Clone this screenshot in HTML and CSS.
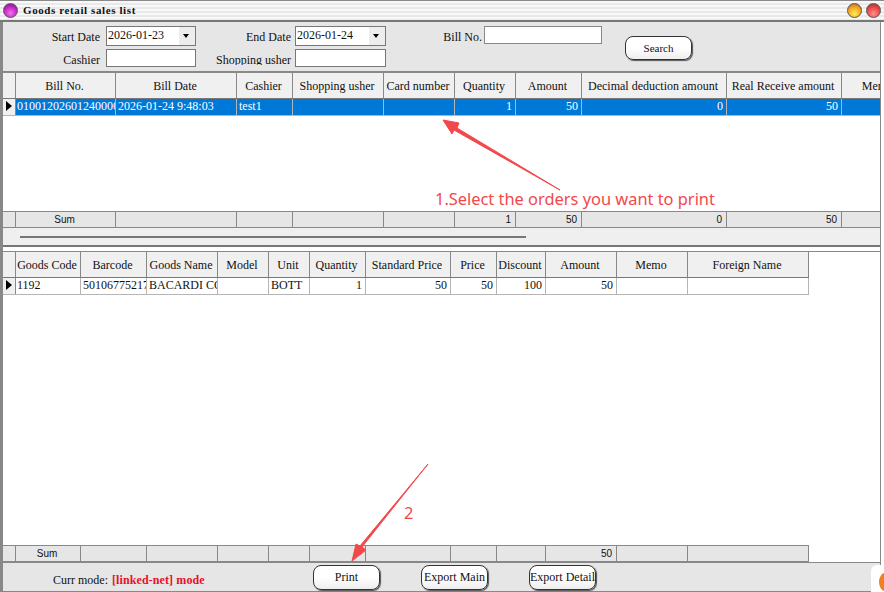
FILE: index.html
```html
<!DOCTYPE html>
<html lang="en">
<head>
    <meta charset="UTF-8">
    <title>Goods retail sales list</title>
    <link rel="stylesheet" href="styles.css">
</head>
<body>
    <div class="window">
        <div class="titlebar">
            <span class="orb orb-purple"></span>
            <span class="title-text">Goods retail sales list</span>
            <span class="orb orb-yellow"></span>
            <span class="orb orb-red"></span>
        </div>

        <div class="filters">
            <label class="f-label f-label-1">Start Date</label>
            <div class="date-box"><span>2026-01-23</span><i class="drop"></i></div>
            <label class="f-label f-label-2">End Date</label>
            <div class="date-box"><span>2026-01-24</span><i class="drop"></i></div>
            <label class="f-label f-label-3">Bill No.</label>
            <div class="text-box bill-box"></div>
            <button class="btn search-btn">Search</button>
            <label class="f-label f-label-1">Cashier</label>
            <div class="text-box"></div>
            <label class="f-label f-label-2 clipped"><span>Shopping usher</span></label>
            <div class="text-box"></div>
        </div>

        <!-- main grid -->
        <div class="grid main-grid">
            <div class="row head">
                <div></div><div>Bill No.</div><div>Bill Date</div><div>Cashier</div><div>Shopping usher</div><div>Card number</div><div>Quantity</div><div>Amount</div><div>Decimal deduction amount</div><div>Real Receive amount</div><div>Memo</div>
            </div>
            <div class="row data selected">
                <div class="marker"></div><div>01001202601240000</div><div>2026-01-24 9:48:03</div><div>test1</div><div></div><div></div><div class="num">1</div><div class="num">50</div><div class="num">0</div><div class="num">50</div><div></div>
            </div>
            <div class="blank"></div>
            <div class="row sum">
                <div></div><div class="center">Sum</div><div></div><div></div><div></div><div></div><div class="num">1</div><div class="num">50</div><div class="num">0</div><div class="num">50</div><div></div>
            </div>
            <div class="scrollbar"><div class="thumb"></div></div>
        </div>

        <div class="splitter"></div>

        <!-- detail grid -->
        <div class="grid detail-grid">
            <div class="row head">
                <div></div><div>Goods Code</div><div>Barcode</div><div>Goods Name</div><div>Model</div><div>Unit</div><div>Quantity</div><div>Standard Price</div><div>Price</div><div>Discount</div><div>Amount</div><div>Memo</div><div>Foreign Name</div>
            </div>
            <div class="row data">
                <div class="marker"></div><div>1192</div><div>5010677521700</div><div>BACARDI COCKTAIL</div><div></div><div>BOTT</div><div class="num">1</div><div class="num">50</div><div class="num">50</div><div class="num">100</div><div class="num">50</div><div></div><div></div>
            </div>
            <div class="blank"></div>
            <div class="row sum">
                <div></div><div class="center">Sum</div><div></div><div></div><div></div><div></div><div></div><div></div><div></div><div></div><div class="num">50</div><div></div><div></div>
            </div>
        </div>

        <div class="statusbar">
            <span class="mode-label">Curr mode:</span>
            <span class="mode-value">[linked-net] mode</span>
            <button class="btn print-btn">Print</button>
            <button class="btn export-main">Export Main</button>
            <button class="btn export-detail">Export Detail</button>
        </div>
    </div>

    <!-- annotations drawn on top of the screenshot -->
    <svg class="arrows" viewBox="0 0 884 592" width="884" height="592">
        <path d="M560 190 L457 128 L459 123 L443 120 L452 134 L454 130 Z" fill="#f2484b" stroke="#f2484b" stroke-width="1"/>
        <path d="M428 464 L362 547 L366 550 L352 561 L356 544 L360 546 Z" fill="#f2484b" stroke="#f2484b" stroke-width="1"/>
    </svg>
    <div class="note note-1">1.Select the orders you want to print</div>
    <div class="note note-2">2</div>
    <div class="corner-badge"><i></i></div>
</body>
</html>
```

FILE: styles.css
```css
body {
    margin: 0;
    background: #fff;
    font-family: "Liberation Serif", serif;
    font-size: 12px;
    color: #111;
    overflow: hidden;
}

.window {
    width: 881px;
    height: 592px;
    box-sizing: border-box;
    border-left: 3px solid #888;
    border-right: 1px solid #888;
    border-bottom: 1px solid #888;
    display: flex;
    flex-direction: column;
    background: #e6e6e6;
}

/* title bar */
.titlebar {
    width: 884px;
    margin-left: -3px;
    height: 22px;
    box-sizing: border-box;
    flex: none;
    display: flex;
    align-items: center;
    padding: 0 3px 1px 3px;
    border-top: 1px solid #8a8a8a;
    border-bottom: 2px solid #777;
    background: repeating-linear-gradient(#f8f8f8 0, #f8f8f8 2px, #e9e9e9 2px, #e9e9e9 4px);
}

.title-text {
    margin-left: 5px;
    margin-right: auto;
    font-weight: bold;
    font-size: 11px;
    letter-spacing: 0.6px;
}

.orb {
    width: 13px;
    height: 13px;
    border-radius: 50%;
    border: 1px solid #555;
    box-sizing: content-box;
}

.orb-purple { background: radial-gradient(circle at 50% 70%, #f070f0, #c020c0 60%, #702070); }
.orb-yellow { background: radial-gradient(circle at 50% 75%, #ffee50, #f0a020 60%, #a06020); margin-right: 4px; }
.orb-red { background: radial-gradient(circle at 50% 75%, #ff9090, #e84040 60%, #903030); }

/* filter form */
.filters {
    flex: none;
    height: 49px;
    display: grid;
    grid-template-columns: 103px 90px 99px 91px 98px 118px 90px;
    grid-template-rows: 23px 18px;
    padding-top: 4px;
    box-sizing: border-box;
    align-items: start;
}

.f-label {
    text-align: right;
    line-height: 20px;
    margin-top: 1px;
    white-space: nowrap;
}

.f-label-1 { padding-right: 6px; }
.f-label-2 { padding-right: 4px; }
.f-label-3 { padding-right: 2px; }

.clipped {
    height: 15px;
    overflow: hidden;
}

.date-box, .text-box {
    height: 18px;
    box-sizing: border-box;
    border: 1px solid #777;
    background: #fff;
}

.date-box {
    display: flex;
    justify-content: space-between;
    line-height: 16px;
    padding-left: 1px;
    height: 20px;
}

.bill-box {
    height: 18px;
    border-color: #888;
}

.drop {
    width: 16px;
    background: #ededed;
    border-left: 1px solid #fff;
    position: relative;
}

.drop:after {
    content: '';
    position: absolute;
    left: 4px;
    top: 7px;
    border-left: 3.5px solid transparent;
    border-right: 3.5px solid transparent;
    border-top: 4px solid #000;
}

.btn {
    width: 67px;
    height: 25px;
    box-sizing: border-box;
    padding: 0;
    border: 1px solid #333;
    border-radius: 8px;
    background: linear-gradient(#fff 50%, #eee);
    box-shadow: 1px 1px 1px #555;
    font-family: "Liberation Serif", serif;
    font-size: 12px;
    color: #111;
    white-space: nowrap;
}

.search-btn {
    grid-column: 7;
    grid-row: 1 / 3;
    justify-self: end;
    margin-top: 10px;
    height: 24px;
    font-size: 11px;
}

/* grids */
.grid {
    display: flex;
    flex-direction: column;
    box-sizing: border-box;
    background: #fff;
    overflow: hidden;
    flex: none;
}

.main-grid {
    height: 174px;
    border-top: 2px solid #888;
}

.detail-grid {
    flex: 1;
    border-top: 1px solid #888;
}

.row {
    display: grid;
    flex: none;
}

.main-grid .row {
    grid-template-columns: 13px 100px 121px 56px 91px 71px 61px 66px 145px 115px 74px;
    width: 922px;
}

.detail-grid .row {
    grid-template-columns: 13px 65px 66px 71px 51px 41px 56px 85px 46px 49px 71px 71px 121px;
    width: 806px;
}

.row > div {
    box-sizing: border-box;
    overflow: hidden;
    white-space: nowrap;
    border-right: 1px solid #999;
}

.head {
    height: 25px;
    background: #f0f0f0;
    border-bottom: 1px solid #777;
}

.head > div {
    text-align: center;
    line-height: 26px;
    padding-right: 2px;
    border-right-color: #888;
}

.data {
    height: 16px;
    line-height: 15px;
    background: #fff;
    border-bottom: 1px solid #b5b5b5;
}

.data > div {
    padding: 0 0 0 2px;
    border-right-color: #b5b5b5;
}

.data > .marker + div {
    padding-left: 1px;
}

.data .num {
    text-align: right;
    padding-right: 3px;
}

.sum .num {
    text-align: right;
    padding-right: 4px;
}

.selected {
    background: #0078d7;
    color: #fff;
}

.marker {
    background: #f0f0f0;
    border-right-color: #888 !important;
    position: relative;
}

.marker:after {
    content: '';
    position: absolute;
    left: 3px;
    top: 2px;
    border-top: 5.5px solid transparent;
    border-bottom: 5.5px solid transparent;
    border-left: 6px solid #000;
}

.blank {
    flex: 1;
    background: #fff;
}

.sum {
    height: 17px;
    box-sizing: border-box;
    background: #e6e6e6;
    border-top: 1px solid #888;
    border-bottom: 1px solid #888;
    font-family: "Liberation Sans", sans-serif;
    font-size: 10px;
    line-height: 15px;
}

.sum > div {
    border-right-color: #888;
}

.sum .center {
    text-align: center;
    padding-right: 2px;
}

.scrollbar {
    flex: none;
    height: 17px;
    background: #efefef;
    padding: 8px 0 0 17px;
    box-sizing: border-box;
}

.thumb {
    width: 506px;
    height: 2px;
    background: #777;
}

.splitter {
    flex: none;
    height: 6px;
    box-sizing: border-box;
    border-top: 2px solid #777;
    background: #fff;
}

/* bottom bar */
.statusbar {
    flex: none;
    height: 29px;
    box-sizing: border-box;
    border-top: 1px solid #888;
    display: flex;
    align-items: flex-start;
    padding-left: 50px;
}

.mode-label {
    margin-top: 10px;
    line-height: 14px;
}

.mode-value {
    margin-top: 10px;
    margin-left: 4px;
    width: 201px;
    line-height: 14px;
    font-weight: bold;
    letter-spacing: 0.1px;
    color: #e8102a;
}

.statusbar .btn {
    margin-top: 2px;
}

.export-main { margin-left: 41px; }
.export-detail { margin-left: 41px; }

/* annotations on top */
.arrows {
    position: absolute;
    left: 0;
    top: 0;
    pointer-events: none;
}

.note {
    position: absolute;
    font-family: "Noto Sans", sans-serif;
    color: #f2484b;
    white-space: nowrap;
}

.note-1 {
    left: 435px;
    top: 187px;
    font-size: 16.4px;
    line-height: 24px;
}

.note-2 {
    left: 404px;
    top: 501px;
    font-size: 16.5px;
    line-height: 24px;
}

.corner-badge {
    position: absolute;
    left: 871px;
    top: 565px;
    width: 13px;
    height: 27px;
    background: #fff;
    border-radius: 6px 0 0 0;
    overflow: hidden;
}

.corner-badge i {
    position: absolute;
    left: 8px;
    top: 8px;
    width: 12px;
    height: 18px;
    border-radius: 50%;
    background: #f08020;
}
```
